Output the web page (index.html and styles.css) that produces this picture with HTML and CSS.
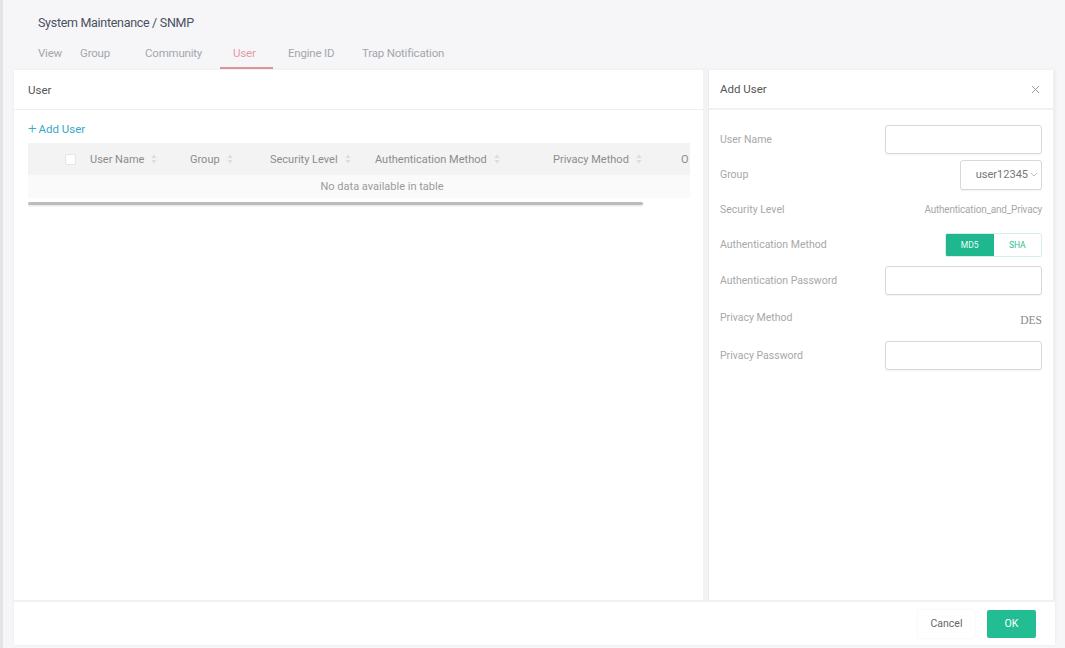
FILE: index.html
```html
<!DOCTYPE html>
<html>
<head>
<meta charset="utf-8">
<link rel="stylesheet" href="styles.css">
</head>
<body>
<div class="app">
  <div class="rail"></div>
  <div class="main">
    <div class="top">
      <div class="crumb">System Maintenance / SNMP</div>
      <div class="tabs">
        <span class="tab t-view">View</span>
        <span class="tab t-group">Group</span>
        <span class="tab t-comm">Community</span>
        <span class="tab t-user active">User</span>
        <span class="tab t-engine">Engine ID</span>
        <span class="tab">Trap Notification</span>
      </div>
    </div>
    <div class="panel">
      <div class="panel-body">
        <div class="list">
          <div class="list-head">User</div>
          <div class="list-content">
            <div class="add"><span class="plus">+</span>Add User</div>
            <div class="table">
              <div class="thead">
                <div class="th th-check"><span class="cb"></span></div>
                <div class="th c1">User Name<svg class="sort" viewBox="0 0 6 10"><path d="M3 0.5L5.5 4H0.5Z M3 9.5L0.5 6H5.5Z" fill="#dcdcdc"/></svg></div>
                <div class="th c2">Group<svg class="sort" viewBox="0 0 6 10"><path d="M3 0.5L5.5 4H0.5Z M3 9.5L0.5 6H5.5Z" fill="#dcdcdc"/></svg></div>
                <div class="th c3">Security Level<svg class="sort" viewBox="0 0 6 10"><path d="M3 0.5L5.5 4H0.5Z M3 9.5L0.5 6H5.5Z" fill="#dcdcdc"/></svg></div>
                <div class="th c4">Authentication Method<svg class="sort" viewBox="0 0 6 10"><path d="M3 0.5L5.5 4H0.5Z M3 9.5L0.5 6H5.5Z" fill="#dcdcdc"/></svg></div>
                <div class="th c5">Privacy Method<svg class="sort" viewBox="0 0 6 10"><path d="M3 0.5L5.5 4H0.5Z M3 9.5L0.5 6H5.5Z" fill="#dcdcdc"/></svg></div>
                <div class="th c6">O</div>
              </div>
              <div class="empty">No data available in table</div>
              <div class="scroll"><div class="thumb"></div></div>
            </div>
          </div>
        </div>
        <div class="drawer">
          <div class="drawer-head">
            <span>Add User</span>
            <svg class="close" viewBox="0 0 10 10"><path d="M1 1L9 9M9 1L1 9" stroke="#999" stroke-width="1.1"/></svg>
          </div>
          <div class="form">
            <div class="row r1"><span class="label">User Name</span><span class="input wide"></span></div>
            <div class="row r2"><span class="label">Group</span><span class="input select">user12345<svg class="chev" viewBox="0 0 10 6"><path d="M1 1L5 5L9 1" stroke="#aaa" fill="none" stroke-width="1"/></svg></span></div>
            <div class="row r3"><span class="label">Security Level</span><span class="value">Authentication_and_Privacy</span></div>
            <div class="row r4"><span class="label">Authentication Method</span><span class="toggle"><span class="opt on">MD5</span><span class="opt">SHA</span></span></div>
            <div class="row r5"><span class="label">Authentication Password</span><span class="input wide"></span></div>
            <div class="row r6"><span class="label">Privacy Method</span><span class="value des">DES</span></div>
            <div class="row r7"><span class="label">Privacy Password</span><span class="input wide"></span></div>
          </div>
        </div>
      </div>
      <div class="footer">
        <span class="btn cancel">Cancel</span>
        <span class="btn ok">OK</span>
      </div>
    </div>
  </div>
</div>
</body>
</html>
```

FILE: styles.css
```css
* { box-sizing: border-box; }
html, body { margin: 0; padding: 0; }
body {
  background: #f6f6f8;
  font-family: Roboto, "Liberation Sans", sans-serif;
  width: 1065px;
  height: 648px;
  overflow: hidden;
  color: #555;
}
.app { display: flex; height: 648px; }
.rail {
  width: 3px;
  background: #e4e4e6;
  flex: none;
}
.main {
  flex: 1;
  display: flex;
  flex-direction: column;
  padding: 0 10px 3px 11px;
}
.top {
  height: 70px;
  padding-left: 24px;
  flex: none;
}
.crumb {
  padding-top: 15px;
  font-size: 12.5px;
  color: #4a5060;
  height: 38px;
  letter-spacing: -0.3px;
}
.tabs {
  display: flex;
  font-size: 11.5px;
  color: #a4a6ad;
  height: 32px;
  align-items: flex-start;
  padding-top: 8px;
}
.tab { position: relative; letter-spacing: -0.2px; flex: none; }
.t-view { width: 42px; }
.t-group { width: 65px; }
.t-comm { width: 88px; }
.t-user { width: 55px; }
.t-engine { width: 74px; }
.tab.active { color: #e49aa4; }
.tab.active::after {
  content: "";
  position: absolute;
  left: -13px;
  width: 53px;
  top: 21px;
  height: 2px;
  background: #d9959e;
}
.panel {
  flex: 1;
  display: flex;
  flex-direction: column;
  background: #fff;
  box-shadow: 0 0 3px rgba(0,0,0,0.06);
}
.panel-body {
  flex: 1;
  display: flex;
  min-height: 0;
}
.list {
  width: 694px;
  display: flex;
  flex-direction: column;
  border-right: 5px solid #f3f3f5;
  flex: none;
}
.list-head {
  height: 40px;
  line-height: 40px;
  padding-left: 14px;
  font-size: 11.5px;
  color: #555;
  border-bottom: 1px solid #efefef;
}
.list-content { padding: 8px 0 0 14px; }
.add {
  font-size: 11.5px;
  color: #3aa9c9;
  height: 25px;
  line-height: 20px;
}
.plus { font-size: 15px; margin-right: 2px; font-weight: 300; }
.table { width: 662px; overflow: hidden; }
.thead {
  display: flex;
  height: 32px;
  align-items: center;
  background: #f3f3f4;
  font-size: 11px;
  color: #8c8c8c;
  white-space: nowrap;
}
.th { display: flex; align-items: center; flex: none; }
.th-check { width: 62px; padding-left: 37px; }
.cb {
  width: 11px; height: 11px;
  background: #fff;
  border: 1px solid #e6e6e6;
  border-radius: 2px;
}
.c1 { width: 100px; }
.c2 { width: 80px; }
.c3 { width: 105px; }
.c4 { width: 178px; }
.c5 { width: 128px; }
.c6 { width: 9px; }
.sort { width: 6px; height: 10px; margin-left: 7px; }
.empty {
  height: 23px;
  line-height: 23px;
  text-align: center;
  font-size: 11px;
  color: #9a9a9a;
  background: #fafafa;
  padding-left: 46px;
}
.scroll {
  height: 10px;
  padding-top: 4px;
}
.thumb {
  width: 615px;
  height: 3px;
  background: #bdbdbd;
  border-radius: 2px;
  box-shadow: 0 1px 2px rgba(0,0,0,0.12);
}
.drawer {
  flex: 1;
  display: flex;
  flex-direction: column;
  border-left: 1px solid #ececec;
  border-right: 2px solid #efeff1;
}
.drawer-head {
  height: 40px;
  display: flex;
  align-items: center;
  justify-content: space-between;
  padding: 0 13px 0 11px;
  font-size: 11.5px;
  color: #555;
  border-bottom: 2px solid #f1f1f3;
}
.close { width: 9px; height: 9px; }
.form { padding: 12px 11px 0 11px; }
.row {
  display: flex;
  align-items: center;
  justify-content: space-between;
  height: 35px;
}
.r5 { height: 36px; }
.r6 { height: 38px; }
.r7 { height: 39px; }
.label { font-size: 10.5px; color: #a8a8a8; }
.input {
  height: 29px;
  border: 1px solid #d8d8d8;
  border-radius: 3px;
  background: #fff;
  box-shadow: 0 1px 1px rgba(0,0,0,0.05);
}
.wide { width: 157px; }
.select {
  width: 82px;
  height: 30px;
  display: flex;
  align-items: center;
  justify-content: flex-end;
  padding-right: 3px;
  font-size: 11px;
  color: #777;
}
.chev { width: 8px; height: 5px; margin-left: 2px; }
.value { font-size: 10px; color: #a8a8a8; letter-spacing: -0.2px; }
.des {
  font-family: "Liberation Serif", serif;
  font-size: 11.5px;
  color: #8a8a8a;
  margin-top: 6px;
  letter-spacing: 0;
}
.toggle {
  display: flex;
  width: 97px;
  height: 24px;
  border: 1px solid #d9eee7;
  border-radius: 2px;
  overflow: hidden;
}
.opt {
  flex: 1;
  display: flex;
  align-items: center;
  justify-content: center;
  font-size: 8.5px;
  color: #2cbc95;
  background: #fff;
}
.opt.on { background: #1fb78e; color: #e9fff7; }
.footer {
  height: 45px;
  border-top: 2px solid #f1f1f3;
  display: flex;
  align-items: center;
  justify-content: flex-end;
  gap: 12px;
  padding-right: 19px;
  flex: none;
}
.btn {
  display: flex;
  align-items: center;
  justify-content: center;
  height: 28px;
  font-size: 10.5px;
  border-radius: 2px;
}
.cancel {
  width: 57px;
  color: #666;
  background: #fff;
  box-shadow: 0 0 2px rgba(0,0,0,0.08);
}
.ok {
  width: 49px;
  color: #fff;
  background: #22bd93;
}
```
